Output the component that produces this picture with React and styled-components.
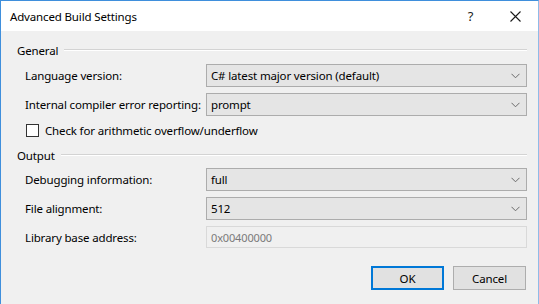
import React from "react";
import styled, { createGlobalStyle } from "styled-components";

const Global = createGlobalStyle`
  html, body { margin: 0; padding: 0; background: #f0f0f0; }
  body { font-family: "Noto Sans", "Open Sans", sans-serif; font-size: 11.5px; letter-spacing: -0.15px; color: #000; }
`;

const Window = styled.div`
  width: 539px;
  height: 304px;
  box-sizing: border-box;
  border-top: 1px solid #3f8fdc;
  border-left: 1px solid #3f8fdc;
  border-right: 1px solid #8fbbe8;
  background: #f0f0f0;
  display: flex;
  flex-direction: column;
  overflow: hidden;
`;

const TitleBar = styled.div`
  height: 30px;
  background: #fff;
  display: flex;
  align-items: center;
  padding-left: 9px;
  flex: none;
`;

const Title = styled.div`
  flex: 1;
  font-size: 11.5px;
  color: #000;
`;

const TitleButton = styled.div`
  width: 45px;
  height: 30px;
  display: flex;
  align-items: center;
  justify-content: center;
  color: #222;
  font-size: 13px;
`;

const Content = styled.div`
  flex: 1;
  display: flex;
  flex-direction: column;
  padding: 11px 11px 0 16px;
`;

const GroupHeader = styled.div`
  display: flex;
  align-items: center;
  height: 16px;
  margin-top: ${(p) => p.$mt || 0}px;
  gap: 6px;
`;

const GroupLine = styled.div`
  flex: 1;
  height: 1px;
  background: #d3d3d3;
  border-bottom: 1px solid #ffffff;
`;

const Row = styled.div`
  display: grid;
  grid-template-columns: 181px 1fr;
  align-items: center;
  padding-left: 8px;
  margin-top: ${(p) => p.$mt || 0}px;
  height: ${(p) => p.$h || 23}px;
`;

const Label = styled.div`
  white-space: nowrap;
`;

const Select = styled.div`
  height: 23px;
  box-sizing: border-box;
  border: 1px solid #acacac;
  background: #e5e5e5;
  display: flex;
  align-items: center;
  padding: 0 6px 0 4px;
`;

const SelectText = styled.div`
  flex: 1;
`;

const TextBox = styled.div`
  height: 22px;
  box-sizing: border-box;
  border: 1px solid #d9d9d9;
  background: #f0f0f0;
  display: flex;
  align-items: center;
  padding: 0 4px;
  color: #7a7a7a;
  font-size: 11px;
`;

const CheckRow = styled.div`
  display: flex;
  align-items: center;
  gap: 6px;
  padding-left: 9px;
  margin-top: ${(p) => p.$mt || 0}px;
  height: 16px;
`;

const CheckBox = styled.div`
  width: 13px;
  height: 13px;
  box-sizing: border-box;
  border: 1px solid #333;
  background: #fff;
`;

const Footer = styled.div`
  display: flex;
  justify-content: flex-end;
  gap: 9px;
  margin-top: 18px;
  padding-right: 1px;
`;

const Button = styled.div`
  width: 73px;
  height: 24px;
  box-sizing: border-box;
  display: flex;
  align-items: center;
  justify-content: center;
  background: #e1e1e1;
  border: ${(p) => (p.$primary ? "2px solid #0078d7" : "1px solid #adadad")};
`;

const Chevron = () => (
  <svg width="9" height="6" viewBox="0 0 9 6">
    <path d="M0.5 0.8 L4.5 4.8 L8.5 0.8" fill="none" stroke="#6b6b6b" strokeWidth="1" />
  </svg>
);

const CloseIcon = () => (
  <svg width="11" height="11" viewBox="0 0 11 11">
    <path d="M0.5 0.5 L10.5 10.5 M10.5 0.5 L0.5 10.5" stroke="#1a1a1a" strokeWidth="1.1" />
  </svg>
);

const Dropdown = ({ value }) => (
  <Select>
    <SelectText>{value}</SelectText>
    <Chevron />
  </Select>
);

export default function App() {
  return (
    <>
      <Global />
      <Window>
        <TitleBar>
          <Title>Advanced Build Settings</Title>
          <TitleButton>?</TitleButton>
          <TitleButton>
            <CloseIcon />
          </TitleButton>
        </TitleBar>
        <Content>
          <GroupHeader>
            <span>General</span>
            <GroupLine />
          </GroupHeader>
          <Row $mt={6}>
            <Label>Language version:</Label>
            <Dropdown value="C# latest major version (default)" />
          </Row>
          <Row $mt={6}>
            <Label>Internal compiler error reporting:</Label>
            <Dropdown value="prompt" />
          </Row>
          <CheckRow $mt={6}>
            <CheckBox />
            <span>Check for arithmetic overflow/underflow</span>
          </CheckRow>
          <GroupHeader $mt={9}>
            <span>Output</span>
            <GroupLine />
          </GroupHeader>
          <Row $mt={5}>
            <Label>Debugging information:</Label>
            <Dropdown value="full" />
          </Row>
          <Row $mt={6}>
            <Label>File alignment:</Label>
            <Dropdown value="512" />
          </Row>
          <Row $mt={6} $h={22}>
            <Label>Library base address:</Label>
            <TextBox>0x00400000</TextBox>
          </Row>
          <Footer>
            <Button $primary>OK</Button>
            <Button>Cancel</Button>
          </Footer>
        </Content>
      </Window>
    </>
  );
}
